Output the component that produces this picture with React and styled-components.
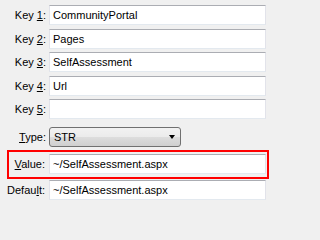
import styled, { createGlobalStyle } from "styled-components";

const GlobalStyle = createGlobalStyle`
  html, body {
    margin: 0;
    padding: 0;
    background: #f0f0f0;
  }
  body {
    font-family: "Liberation Sans", Arial, sans-serif;
    font-size: 11px;
    color: #000;
  }
`;

const keys = ["CommunityPortal", "Pages", "SelfAssessment", "Url", ""];

const App = () => {
  return (
    <>
      <GlobalStyle />
      <Form>
        {keys.map((val, i) => (
          <Row key={i}>
            <Label>
              Key <u>{i + 1}</u>:
            </Label>
            <TextBox>{val}</TextBox>
          </Row>
        ))}

        {/* type selector */}
        <Row $top={4}>
          <Label>
            <u>T</u>ype:
          </Label>
          <Select>
            <span>STR</span>
            <Arrow />
          </Select>
        </Row>

        {/* highlighted value row */}
        <Highlight>
          <Row $inner>
            <Label $pad={4}>
              <u>V</u>alue:
            </Label>
            <TextBox>~/SelfAssessment.aspx</TextBox>
          </Row>
        </Highlight>

        <Row $top={1}>
          <Label $pad={4}>
            Defau<u>l</u>t:
          </Label>
          <TextBox>~/SelfAssessment.aspx</TextBox>
        </Row>
      </Form>
    </>
  );
};

const Form = styled.div`
  display: flex;
  flex-direction: column;
  width: 270px;
  padding: 5px 4px 0 0;
  box-sizing: border-box;
`;

const Row = styled.div`
  display: grid;
  grid-template-columns: ${(p) => (p.$inner ? "40px" : "49px")} 1fr;
  align-items: center;
  height: 20px;
  margin-top: ${(p) => (p.$inner ? 0 : p.$top ?? 0)}px;
  margin-bottom: ${(p) => (p.$top !== undefined || p.$inner ? 0 : 3.5)}px;
`;

const Label = styled.label`
  text-align: right;
  padding-right: ${(p) => p.$pad ?? 3}px;
  white-space: nowrap;
  u {
    text-decoration: underline;
    text-underline-offset: 1px;
  }
`;

const TextBox = styled.div`
  height: 20px;
  box-sizing: border-box;
  background: #fff;
  border: 1px solid #e2e3ea;
  border-top-color: #abadb3;
  border-bottom-color: #e3e9ef;
  padding: 0 3px;
  display: flex;
  align-items: center;
  white-space: nowrap;
  overflow: hidden;
`;

const Select = styled.div`
  width: 132px;
  height: 20px;
  box-sizing: border-box;
  border: 1px solid #707070;
  border-radius: 3px;
  background: linear-gradient(#f2f2f2 0%, #ebebeb 50%, #dddddd 51%, #cfcfcf 100%);
  display: flex;
  align-items: center;
  justify-content: space-between;
  padding: 0 5px 0 4px;
`;

const Arrow = styled.span`
  width: 0;
  height: 0;
  border-left: 3.5px solid transparent;
  border-right: 3.5px solid transparent;
  border-top: 4px solid #000;
`;

const Highlight = styled.div`
  margin: 3px -3px 0 7px;
  border: 2px solid #ff0000;
  padding: 2px 1px 3px 0;
`;

export default App;
